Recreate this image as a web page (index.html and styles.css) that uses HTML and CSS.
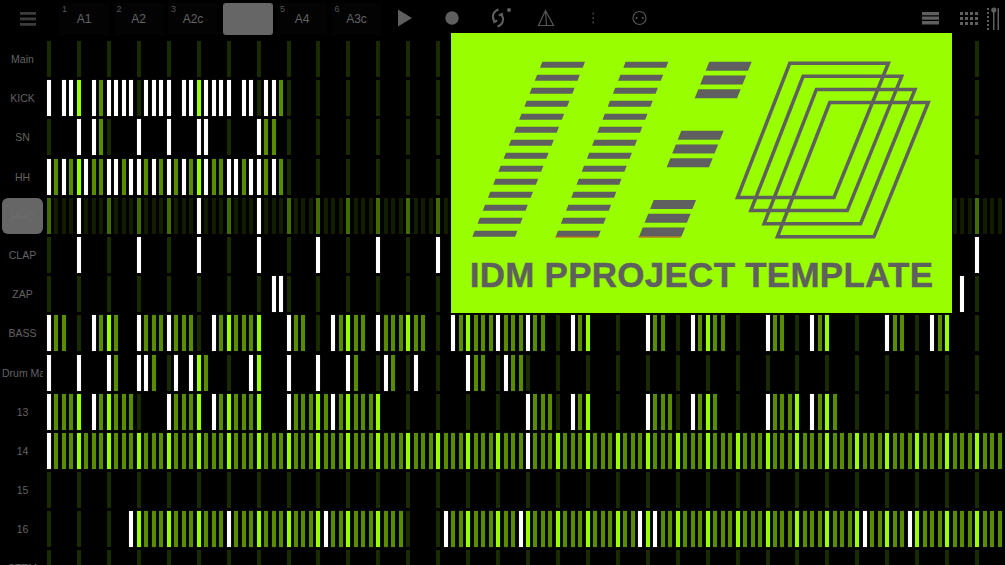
FILE: index.html
```html
<!DOCTYPE html>
<html lang="en">
<head>
  <meta charset="UTF-8" />
  <meta name="viewport" content="width=device-width, initial-scale=1.0" />
  <title>IDM Project Template</title>
  <link rel="stylesheet" href="styles.css">
</head>
<body>
  <div class="topbar">
    <div class="menu-btn">
      <svg width="16" height="14" viewBox="0 0 16 14"><path d="M0 0h16v2.7H0zM0 5.5h16v2.7H0zM0 11h16v2.7H0z"/></svg>
    </div>
    <div class="tabs">
      <div class="tab"><span class="tab-num">1</span>A1</div>
      <div class="tab"><span class="tab-num">2</span>A2</div>
      <div class="tab"><span class="tab-num">3</span>A2c</div>
      <div class="tab selected"></div>
      <div class="tab"><span class="tab-num">5</span>A4</div>
      <div class="tab"><span class="tab-num">6</span>A3c</div>
    </div>
    <div class="tools">
      <div class="tool"><svg width="24" height="24" viewBox="0 0 24 24"><path class="solid" d="M5 3.5 19 12 5 20.500z"/></svg></div>
      <div class="tool"><svg width="24" height="24" viewBox="0 0 24 24"><circle class="solid" cx="12" cy="12" r="6.700"/></svg></div>
      <div class="tool"><svg width="24" height="24" viewBox="0 0 24 24"><path class="line thick" d="M11.500 3.500C6.500 5 4.500 10 7 15M10.500 20.500C15.500 19 17.500 14 15 9M6.500 12.500l.7 3.500 3-1.500M15.500 11.500 14.800 8l-3 1.500"/><circle class="solid" cx="22" cy="4" r="2"/></svg></div>
      <div class="tool"><svg width="24" height="24" viewBox="0 0 24 24"><path class="line" d="M11.500 4.500 4.500 19.500h15zM11.500 4.500l1 15"/></svg></div>
      <div class="tool"><svg width="24" height="24" viewBox="0 0 24 24"><path class="faint" d="M11.500 6.500h1.500v2h-1.500zM11.500 11h1.500v2h-1.500zM11.500 15.500h1.500v2h-1.500z"/></svg></div>
      <div class="tool"><svg width="24" height="24" viewBox="0 0 24 24"><circle class="line" cx="11.500" cy="12" r="6.500"/><circle class="solid" cx="8.500" cy="12" r="1"/><circle class="solid" cx="14.800" cy="12" r="1"/></svg></div>
    </div>
    <div class="view-btns">
      <svg width="17" height="13" viewBox="0 0 17 13"><path class="solid" d="M0 0h17v3.300H0zM0 4.500h17v3.300H0zM0 9h17v3.500H0z"/></svg>
      <svg width="18" height="13" viewBox="0 0 18 13"><path class="solid" d="M0 0h3v3H0zM5 0h3v3H5zM10 0h3v3h-3zM15 0h3v3h-3zM0 5h3v3H0zM5 5h3v3H5zM10 5h3v3h-3zM15 5h3v3h-3zM0 10h3v3H0zM5 10h3v3H5zM10 10h3v3h-3zM15 10h3v3h-3z"/></svg>
      <svg width="13" height="23" viewBox="0 0 13 23"><path class="solid" d="M0 1h2v2H0zM0 5h2v2H0zM0 9h2v2H0zM0 13h2v2H0zM0 17h2v2H0zM0 21h2v2H0zM6 3h1.500v20H6zM10.500 1H12v22h-1.500z"/><circle class="solid" cx="6.800" cy="3" r="2.600"/></svg>
    </div>
  </div>

  <div class="tracks" id="tracks"></div>

  <div class="banner">
    <svg class="banner-art" width="501" height="225" viewBox="451 33 501 225">
      <defs>
        <polygon id="bar" points="542.300,61.700 585,61.700 582.700,67.700 540,67.700"/>
        <polygon id="dash" points="709.300,61.700 751.700,61.700 748,70.700 705.700,70.700"/>
        <g id="ladder">
          <use href="#bar"/>
          <use href="#bar" x="-5.200" y="13"/>
          <use href="#bar" x="-10.400" y="26"/>
          <use href="#bar" x="-15.600" y="39"/>
          <use href="#bar" x="-20.800" y="52"/>
          <use href="#bar" x="-26" y="65"/>
          <use href="#bar" x="-31.200" y="78"/>
          <use href="#bar" x="-36.400" y="91"/>
          <use href="#bar" x="-41.600" y="104"/>
          <use href="#bar" x="-46.800" y="117"/>
          <use href="#bar" x="-52" y="130"/>
          <use href="#bar" x="-57.200" y="143"/>
          <use href="#bar" x="-62.400" y="156"/>
          <use href="#bar" x="-67.600" y="169"/>
        </g>
        <g id="dashes">
          <use href="#dash"/>
          <use href="#dash" x="-5.500" y="13.800"/>
          <use href="#dash" x="-11" y="27.600"/>
        </g>
        <polygon id="frame" points="789.800,63.200 888.400,63.200 834,197.500 737.500,197.500"/>
      </defs>
      <use href="#ladder"/>
      <use href="#ladder" x="83.300"/>
      <use href="#dashes"/>
      <use href="#dashes" x="-28" y="69"/>
      <use href="#dashes" x="-55.600" y="138.300"/>
      <path class="red-edge" d="M555.300 237h42.400M638.300 237h42.400"/>
      <g class="frames">
        <use href="#frame"/>
        <use href="#frame" x="13.300" y="13.100"/>
        <use href="#frame" x="26.600" y="26.200"/>
        <use href="#frame" x="39.900" y="39.300"/>
      </g>
    </svg>
    <div class="banner-title">IDM PPROJECT TEMPLATE</div>
  </div>

  <script src="main.js"></script>
</body>
</html>
```
FILE: styles.css
```css
html, body {
  margin: 0;
  height: 100%;
}
body {
  position: relative;
  width: 1005px;
  height: 565px;
  overflow: hidden;
  background-color: #000;
  font-family: "Liberation Sans", Arial, sans-serif;
  color: #636363;
}

/* top bar */
.topbar {
  display: flex;
  align-items: center;
  height: 38px;
  margin-bottom: 3px;
}
.menu-btn {
  width: 59px;
  display: flex;
  padding-left: 20px;
  box-sizing: border-box;
}
.menu-btn svg {
  fill: #3c3c3c;
}
.tabs {
  display: flex;
  gap: 4.500px;
  height: 32px;
}
.tab {
  position: relative;
  width: 50px;
  height: 32px;
  background: #030303;
  font-size: 12px;
  line-height: 33px;
  text-align: center;
}
.tab.selected {
  background: #666;
  border-radius: 3px;
}
.tab-num {
  position: absolute;
  left: 3px;
  top: 0;
  font-size: 9px;
  line-height: 12px;
  color: #555;
}
.tools {
  display: flex;
  margin-left: -0.500px;
}
.tool {
  width: 47px;
  display: flex;
  justify-content: center;
  margin-top: -2px;
}
.view-btns {
  display: flex;
  align-items: center;
  margin-left: auto;
  margin-right: 5px;
  gap: 9px;
  margin-top: -2px;
}
.view-btns svg:first-child {
  margin-right: 12px;
}
.solid {
  fill: #5f5f5f;
}
.faint {
  fill: #444;
}
.line {
  fill: none;
  stroke: #555;
  stroke-width: 1.200;
}
.line.thick {
  stroke: #5f5f5f;
  stroke-width: 2;
}

/* sequencer */
.tracks {
  display: flex;
  flex-direction: column;
  gap: 3.200px;
}
.track {
  display: flex;
  height: 36px;
  flex-shrink: 0;
}
.track-label {
  width: 41px;
  margin: 0 4px 0 2px;
  display: flex;
  align-items: center;
  justify-content: safe center;
  overflow: hidden;
  white-space: nowrap;
  font-size: 10.500px;
  border-radius: 6px;
}
.track-label.selected {
  background: #666;
  color: #6c6c6c;
}
.steps {
  display: grid;
  grid-template-columns: repeat(128, 4px);
  column-gap: 3.490px;
}
.step.beat {
  background: #1b2b00;
}
.step.note {
  background: #5a8c00;
  box-shadow: 0 0 1px #3f6300;
}
.step.strong {
  background: #9f0;
  box-shadow: 0 0 1px #6fb000;
}
.step.accent {
  background: #fff;
  box-shadow: 0 0 1px #888;
}
.muted .step {
  background: #121d00;
}
.muted .step.beat {
  background: #426c00;
}
.muted .step.accent {
  background: #fff;
}

/* template banner, sits on top of the grid */
.banner {
  position: absolute;
  left: 451px;
  top: 33px;
  width: 501px;
  height: 280px;
  background: #9f0;
  display: flex;
  flex-direction: column;
  align-items: center;
}
.banner-art {
  display: block;
  fill: #5f5f5f;
}
.banner-title {
  font-size: 35px;
  font-weight: bold;
  line-height: 34px;
  letter-spacing: 0.250px;
  color: #5f5f5f;
  -webkit-text-stroke: 0.400px #5f5f5f;
  white-space: nowrap;
}
.red-edge {
  fill: none;
  stroke: #c8402a;
  stroke-width: 1;
}
.frames {
  fill: none;
  stroke: #5f5f5f;
  stroke-width: 3.500;
}
```
FILE: main.js
```js
const STEPS = 128;
const EMPTY = '.'.repeat(STEPS);
const ALL = 'x'.repeat(STEPS);

// W = accent, x = note, . = rest. Spaces just split the bars up.
const TRACKS = [
  { name: 'Main', pattern: '' },
  { name: 'KICK', pattern: 'W.WW x.Wx WWWW .WWW W.WW xWWW W.WW .WWx' },
  { name: 'SN', pattern: '.... W.Wx .... W... W... WW.. .... Wxx.' },
  { name: 'HH', pattern: 'WxWx xWxx WWxW WxWx WxWx xWxx WWxW WxWx' },
  { name: 'HHO', pattern: '.... W... .... .... .... W... .... W...', selected: true, muted: true },
  { name: 'CLAP', pattern: '.... W...'.concat(' .... W...'.repeat(15)) },
  { name: 'ZAP', pattern: '.... .... .... .... .... .... .... ..WW ' + '.... '.repeat(22) + '..W.' },
  { name: 'BASS', pattern: 'Wxx. ..Wx xx.. Wxxx Wxxx ..Wx xxxx x... Wxx. ..Wx xxx. Wxxx xxx. ..Wx xxxx Wxxx Wxx. ..Wx x... .... Wxx. ..Wx xxx. .... Wxx. ..Wx x... .... Wxx. ..Wx x... ....' },
  { name: 'Drum Machine', pattern: 'W... W... Wx.. WWx. .W.W xx.. ...W x... W... W... Wx.. .Wx. .W.. .... Wxx. .Wxx' },
  { name: '13', pattern: 'Wxxx x.Wx xxxx .... Wxxx x.Wx xxxx x... Wxxx xxWx xxxx x... .... .... .... .... Wxxx ..Wx x... .... Wxxx ..Wx xx.. .... Wxxx x.Wx xx..' },
  { name: '14', pattern: 'W' + ALL.slice(1, 64) + 'W' + ALL.slice(65) },
  { name: '15', pattern: '' },
  { name: '16', pattern: '.... .... ...W xxxx xxxx xxxx Wxxx xxxx xxxx xWxx xxxx xxxx .... .Wxx xxxx xxxW xxxx xxxx xxxx xxxW xWxx xxxx xxxx xxxx xxxx xxxx xxxx xWxx xxxW xxxx xxxx xxxx' },
  { name: 'STEM', pattern: '' },
];

function buildTrack(track) {
  const row = document.createElement('div');
  row.className = track.muted ? 'track muted' : 'track';

  const label = document.createElement('div');
  label.className = track.selected ? 'track-label selected' : 'track-label';
  label.textContent = track.name;
  row.appendChild(label);

  const steps = document.createElement('div');
  steps.className = 'steps';
  const pattern = (track.pattern.replace(/ /g, '') + EMPTY).slice(0, STEPS);
  for (let i = 0; i < STEPS; i++) {
    const step = document.createElement('div');
    const beat = i % 4 === 0;
    step.className = 'step';
    if (pattern[i] === 'W') step.classList.add('accent');
    else if (pattern[i] === 'x') step.classList.add(beat ? 'strong' : 'note');
    else if (beat) step.classList.add('beat');
    steps.appendChild(step);
  }
  row.appendChild(steps);
  return row;
}

const tracksEl = document.getElementById('tracks');
TRACKS.forEach(t => tracksEl.appendChild(buildTrack(t)));
```
